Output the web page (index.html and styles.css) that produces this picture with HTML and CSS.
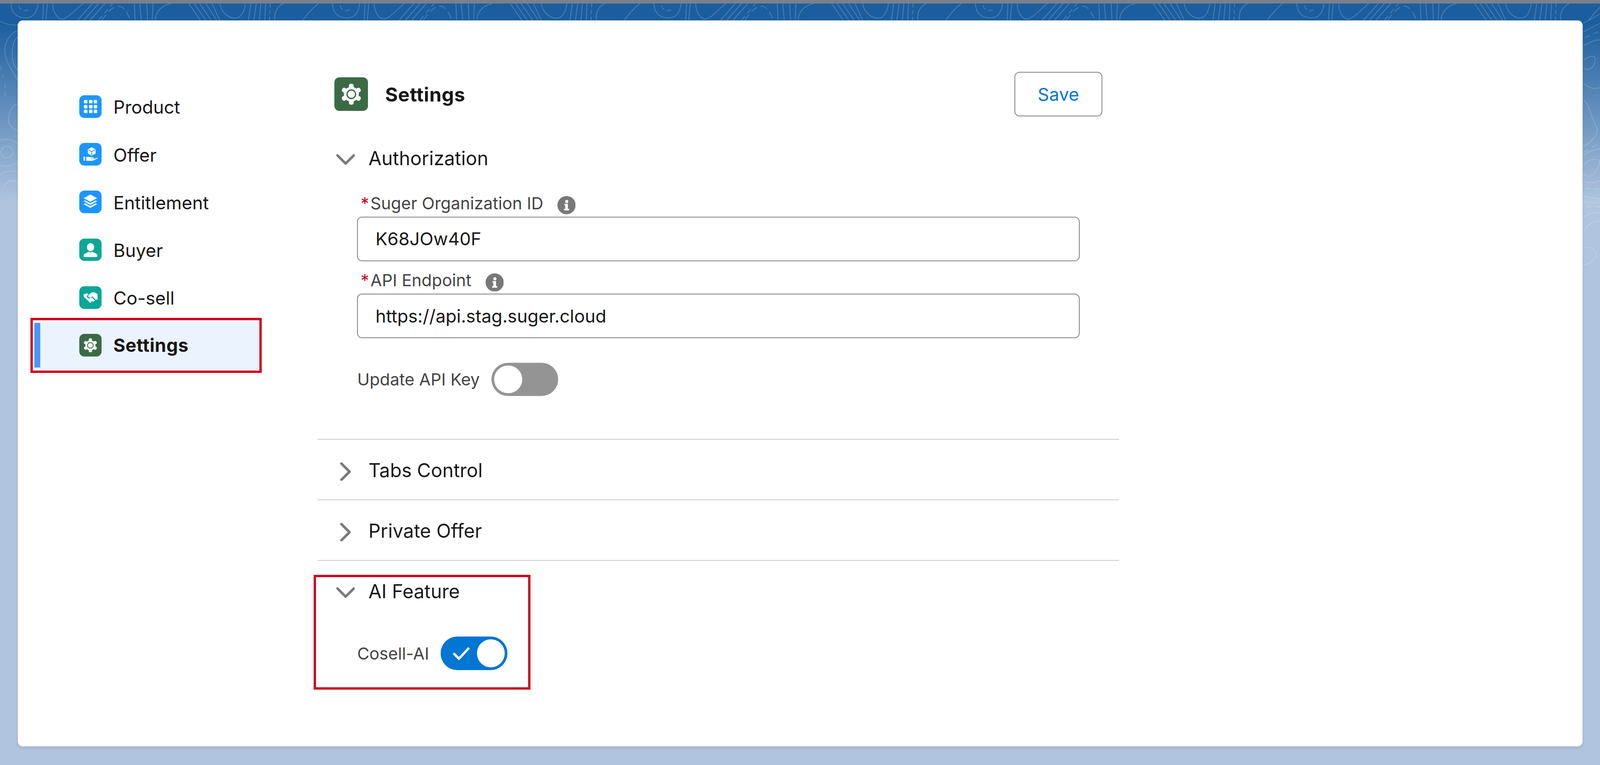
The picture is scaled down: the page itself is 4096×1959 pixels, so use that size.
FILE: index.html
```html
<!DOCTYPE html>
<html lang="en">
<head>
<meta charset="utf-8">
<title>Settings</title>
<link rel="stylesheet" href="styles.css">
</head>
<body>
<svg class="defs" width="0" height="0" aria-hidden="true">
  <defs>
    <symbol id="gear" viewBox="0 0 100 100">
      <g fill="#fff">
        <circle cx="50" cy="50" r="35"/>
        <rect x="39" y="1" width="22" height="30" rx="9"/>
        <rect x="39" y="1" width="22" height="30" rx="9" transform="rotate(60 50 50)"/>
        <rect x="39" y="1" width="22" height="30" rx="9" transform="rotate(120 50 50)"/>
        <rect x="39" y="1" width="22" height="30" rx="9" transform="rotate(180 50 50)"/>
        <rect x="39" y="1" width="22" height="30" rx="9" transform="rotate(240 50 50)"/>
        <rect x="39" y="1" width="22" height="30" rx="9" transform="rotate(300 50 50)"/>
      </g>
      <circle cx="50" cy="50" r="20" fill="none" stroke="#3b6b45" stroke-width="6"/>
    </symbol>
    <symbol id="chev-down" viewBox="0 0 48 48">
      <path d="M3 13 L24 34 L45 13" fill="none" stroke="#7a7a7a" stroke-width="6.5" stroke-linecap="round" stroke-linejoin="round"/>
    </symbol>
    <symbol id="chev-right" viewBox="0 0 48 48">
      <path d="M13 3 L34 24 L13 45" fill="none" stroke="#7a7a7a" stroke-width="6.5" stroke-linecap="round" stroke-linejoin="round"/>
    </symbol>
    <symbol id="info" viewBox="0 0 47 47">
      <circle cx="23.500" cy="23.500" r="23.500" fill="#787878"/>
      <circle cx="24" cy="14" r="4" fill="#fff"/>
      <path d="M18 20h9v13h3v4H17v-4h3v-9h-2z" fill="#fff"/>
    </symbol>
    <pattern id="topo" x="0" y="9" width="828" height="60" patternUnits="userSpaceOnUse">
      <g fill="none" stroke="#fff" stroke-opacity=".22" stroke-width="2">
        <path d="M28 0C30 30 48 37 66 37C88 37 96 20 98 0"/>
        <path d="M48 5C52 18 60 22 72 16" stroke-dasharray="12 8"/>
        <path d="M112 0L110 43M122 0L118 43"/>
        <path d="M136 0C136 25 150 40 160 40C176 40 204 5 214 0"/>
        <path d="M200 43L238 0M216 43L254 0M232 43L270 0"/>
        <path d="M254 43L290 0" stroke-dasharray="14 9"/>
        <path d="M262 43C274 28 286 8 306 7C322 8 330 30 336 43" stroke-dasharray="18 10"/>
        <path d="M346 0L348 43M360 0L364 43M378 0L380 43M394 0L392 43"/>
        <path d="M400 43C400 25 412 6 440 0"/>
        <path d="M486 0L516 43M500 0L530 43M514 0L544 43M530 0L558 43M546 0L566 43"/>
        <path d="M566 0C570 25 590 38 606 38C620 38 630 20 632 0"/>
        <path d="M646 0L640 43M660 0L654 43M672 0L668 43M684 0L682 43"/>
        <path d="M696 0L694 43" stroke-dasharray="10 7"/>
        <path d="M708 43C706 25 712 8 730 0"/>
        <path d="M780 43C790 30 802 14 820 0"/>
      </g>
    </pattern>
  </defs>
</svg>
<div class="page">
  <div class="topbar"></div>
  <svg class="backdrop" viewBox="0 0 4121 1971" aria-hidden="true">
    <rect x="0" y="9" width="4121" height="43" fill="url(#topo)"/>
    <g fill="none" stroke="#fff" stroke-opacity=".2" stroke-width="2">
      <path d="M0 55C10 60 25 66 45 64"/>
      <path d="M45 78C25 88 14 105 12 130C14 160 30 180 45 205"/>
      <path d="M45 95C34 105 30 125 32 150C34 165 40 175 45 180"/>
      <path d="M2 170L8 200M12 215C16 235 14 250 8 255" stroke-dasharray="12 10"/>
      <path d="M45 268C30 272 22 290 22 315C24 325 36 332 45 338"/>
      <circle cx="18" cy="392" r="15"/>
      <path d="M0 362C15 355 35 360 45 370M0 425C15 432 35 425 45 420"/>
      <path d="M0 450C15 438 35 440 45 444M10 480C20 465 35 462 45 470"/>
      <path d="M4078 60L4121 36M4078 82L4121 60"/>
      <path d="M4082 97L4121 80" stroke-dasharray="14 10"/>
      <path d="M4078 118C4095 110 4105 102 4121 103"/>
      <path d="M4078 155C4095 145 4105 140 4108 150C4110 165 4100 178 4090 179C4085 179 4080 176 4078 175"/>
      <path d="M4078 215C4095 228 4105 230 4121 226"/>
      <path d="M4080 260C4095 270 4100 310 4113 330C4118 345 4100 365 4078 378"/>
      <path d="M4080 392L4121 368" stroke-dasharray="14 10"/>
      <path d="M4078 400C4095 390 4105 385 4121 383"/>
      <path d="M4078 425C4090 412 4105 408 4117 412C4125 420 4110 450 4095 454C4085 455 4080 450 4078 445"/>
      <path d="M4078 468C4095 473 4110 470 4121 465"/>
      <path d="M4082 485L4121 488" stroke-dasharray="14 10"/>
      <path d="M4078 505C4100 510 4110 512 4121 512M4078 520C4100 522 4110 524 4121 522"/>
      <path d="M4085 533L4121 533" stroke-dasharray="14 10"/>
      <path d="M4078 560C4095 548 4110 547 4121 548"/>
      <path d="M4078 600C4085 578 4105 568 4121 570"/>
      <path d="M4078 638C4095 635 4110 640 4112 655C4110 670 4095 680 4078 682"/>
    </g>
  </svg>
  <main class="card">
    <nav class="sidebar">
      <a class="nav-item">
        <span class="tile tile-blue">
          <svg class="tile-art" viewBox="0 0 58 58">
            <g fill="#fff">
              <rect x="12" y="12" width="9" height="9" rx="2.500"/><rect x="25" y="12" width="9" height="9" rx="2.500"/><rect x="37" y="12" width="9" height="9" rx="2.500"/>
              <rect x="12" y="25" width="9" height="9" rx="2.500"/><rect x="25" y="25" width="9" height="9" rx="2.500"/><rect x="37" y="25" width="9" height="9" rx="2.500"/>
              <rect x="12" y="37" width="9" height="9" rx="2.500"/><rect x="25" y="37" width="9" height="9" rx="2.500"/><rect x="37" y="37" width="9" height="9" rx="2.500"/>
            </g>
          </svg>
        </span>
        <span class="nav-label">Product</span>
      </a>
      <a class="nav-item">
        <span class="tile tile-blue">
          <svg class="tile-art" viewBox="0 0 58 58">
            <path d="M32 11l10 5.500v11L32 33l-10-5.500v-11z" fill="#fff"/>
            <path d="M23 17l9 5.500 9-5.500M32 22.500V32" fill="none" stroke="#1b96ff" stroke-width="1.800"/>
            <rect x="11" y="35" width="4" height="11" rx="1" fill="#fff"/>
            <path d="M18 36h8c2 0 3 1 5 1h5c1.500 0 2 2.500.5 3h-7v1h8l8-2.500c2-.5 2.500 1 1 2l-11 5c-1 .4-2 .5-3 .5H18z" fill="#fff"/>
          </svg>
        </span>
        <span class="nav-label">Offer</span>
      </a>
      <a class="nav-item">
        <span class="tile tile-blue">
          <svg class="tile-art" viewBox="0 0 58 58">
            <g fill="#fff">
              <path d="M28.500 10L46 19.500 28.500 29 11 19.500z"/>
              <path d="M11 27.500l4-2 13.500 7 13.500-7 4 2-17.500 9.500z"/>
              <path d="M11 35l4-2 13.500 7 13.500-7 4 2-17.500 9.500z"/>
            </g>
          </svg>
        </span>
        <span class="nav-label">Entitlement</span>
      </a>
      <a class="nav-item">
        <span class="tile tile-teal">
          <svg class="tile-art" viewBox="0 0 58 58">
            <g fill="#fff">
              <ellipse cx="29" cy="22" rx="9.500" ry="10.500"/>
              <path d="M11 44c0-6 9-7 13-10 3 2 7 2 10 0 4 3 13 4 13 10 0 2-1 3.500-3 3.500H14c-2 0-3-1.500-3-3.500z"/>
            </g>
          </svg>
        </span>
        <span class="nav-label">Buyer</span>
      </a>
      <a class="nav-item">
        <span class="tile tile-teal">
          <svg class="tile-art" viewBox="0 0 58 58">
            <g fill="#fff">
              <path d="M24 22l9-7 7 1 7 4v14l-5 1-8-9-6 4-5-3z"/>
              <path d="M11 21l9-3 3 2-4 7 5 5 9-3 7 8-4 3-3-2-3 3-3-2-15-11z"/>
              <path d="M18 33l3-2 10 10-3 2z"/>
            </g>
          </svg>
        </span>
        <span class="nav-label">Co-sell</span>
      </a>
      <a class="nav-item nav-item-active">
        <span class="mark-box mark-box-nav"></span>
        <span class="tile tile-green">
          <svg class="tile-gear"><use href="#gear"/></svg>
        </span>
        <span class="nav-label">Settings</span>
      </a>
    </nav>
    <section class="content">
      <header class="head">
        <div class="head-title">
          <span class="head-tile"><svg class="head-gear"><use href="#gear"/></svg></span>
          <h1>Settings</h1>
        </div>
        <button class="save">Save</button>
      </header>

      <div class="acc acc-first">
        <div class="acc-head"><svg class="chev"><use href="#chev-down"/></svg><h2>Authorization</h2></div>
        <div class="acc-body acc-body-auth">
          <div class="field-label"><span class="req">*</span><span>Suger Organization ID</span><svg class="info"><use href="#info"/></svg></div>
          <div class="field-input">K68JOw40F</div>
          <div class="field-label field-label-next"><span class="req">*</span><span>API Endpoint</span><svg class="info"><use href="#info"/></svg></div>
          <div class="field-input">https://api.stag.suger.cloud</div>
          <div class="toggle-row toggle-row-auth">
            <span>Update API Key</span>
            <span class="toggle toggle-off"><span class="knob"></span></span>
          </div>
        </div>
      </div>

      <div class="acc">
        <div class="acc-head"><svg class="chev"><use href="#chev-right"/></svg><h2>Tabs Control</h2></div>
      </div>
      <div class="acc">
        <div class="acc-head"><svg class="chev"><use href="#chev-right"/></svg><h2>Private Offer</h2></div>
      </div>
      <div class="acc acc-ai">
        <span class="mark-box mark-box-ai"></span>
        <div class="acc-head"><svg class="chev"><use href="#chev-down"/></svg><h2>AI Feature</h2></div>
        <div class="acc-body">
          <div class="toggle-row toggle-row-ai">
            <span>Cosell-AI</span>
            <span class="toggle toggle-on">
              <svg class="check" viewBox="0 0 46 34"><path d="M3 17L17 31L43 3" fill="none" stroke="#fff" stroke-width="6"/></svg>
              <span class="knob"></span>
            </span>
          </div>
        </div>
      </div>
    </section>
  </main>
</div>
</body>
</html>
```

FILE: styles.css
```css
* { box-sizing: border-box; }
html, body { margin: 0; padding: 0; overflow: hidden; background: #b0c4df; }
.defs { position: absolute; }

.page {
  zoom: 0.99393;
  position: relative;
  width: 4121px;
  height: 1971px;
  font-family: Inter, "Noto Sans", sans-serif;
  color: #181818;
  background: linear-gradient(180deg, #1b5e9f 0, #1b5e9f 60px, #b0c4df 520px, #b0c4df 100%);
}
.topbar { position: relative; height: 9px; background: #7b808a; z-index: 1; }
.backdrop { position: absolute; left: 0; top: 0; width: 100%; height: 100%; }

.card {
  position: relative;
  display: grid;
  grid-template-columns: 772px 2064px;
  margin: 43px 0 0 45px;
  width: 4032px;
  height: 1872px;
  background: #fff;
  border: 2px solid #cbcbcb;
  border-radius: 13px;
  box-shadow: 0 4px 8px rgba(24, 24, 24, .1);
}

/* sidebar */
.sidebar {
  display: flex;
  flex-direction: column;
  gap: 8px;
  padding: 164px 151px 0 43px;
}
.nav-item {
  position: relative;
  display: flex;
  align-items: center;
  gap: 30px;
  height: 115px;
  padding-left: 115px;
  font-size: 46.500px;
}
.nav-label, .tile { position: relative; z-index: 1; }
.nav-label { padding-top: 3px; }
.nav-item-active { font-size: 47px; font-weight: 700; letter-spacing: .5px; }
.nav-item-active .nav-label { padding-top: 0; }
.nav-item-active::before {
  content: "";
  position: absolute;
  z-index: 1;
  left: 0; top: 0; bottom: 0;
  width: 15px;
  background: #4a95f8;
}
.mark-box { position: absolute; border: 7px solid #d0021f; }
.mark-box-nav { left: -11px; top: -13px; right: -7px; bottom: -14px; background: #ebf3fe; }
.mark-box-ai { left: -10px; top: 37px; width: 558px; height: 295px; }

.tile {
  flex: none;
  display: flex;
  align-items: center;
  justify-content: center;
  width: 58px;
  height: 58px;
  border-radius: 13px;
}
.tile-blue { background: #1b96ff; }
.tile-teal { background: #0ba797; }
.tile-green { background: #3b6b45; }
.tile-art { width: 58px; height: 58px; }
.tile-gear { width: 37px; height: 37px; }

/* content */
.content { padding-top: 132px; }
.head {
  display: flex;
  align-items: center;
  justify-content: space-between;
  height: 115px;
  padding: 0 43px;
}
.head-title { display: flex; align-items: center; gap: 44px; }
.head-tile {
  display: flex;
  align-items: center;
  justify-content: center;
  width: 87px;
  height: 87px;
  border-radius: 13px;
  background: #3b6b45;
}
.head-gear { width: 55px; height: 55px; }
h1 { margin: 2px 0 0; font-size: 50px; font-weight: 700; letter-spacing: .6px; }
.save {
  width: 226px;
  height: 115px;
  padding: 0;
  font: inherit;
  font-size: 46px;
  color: #0176d3;
  background: #fff;
  border: 3px solid #808080;
  border-radius: 13px;
}

.acc { position: relative; border-top: 3px solid #c9c9c9; }
.acc-first { margin-top: 32px; border-top: 0; }
.acc-head {
  display: flex;
  align-items: center;
  gap: 35px;
  height: 154px;
  padding: 5px 0 0 48px;
}
.acc-first .acc-head { height: 152.500px; padding-top: 0; }
.chev { flex: none; width: 48px; height: 48px; margin-top: 6px; }
h2 { margin: 0; font-size: 49px; font-weight: 400; }
.acc-body { padding-left: 102px; }
.acc-body-auth { padding-top: 16px; padding-bottom: 110px; width: 1963px; }

.field-label {
  display: flex;
  align-items: center;
  height: 46px;
  margin-bottom: 12px;
  padding-left: 9px;
  font-size: 43px;
  color: #444;
}
.field-label-next { margin-top: 26px; }
.req { width: 25px; color: #c9001f; }
.info { flex: none; width: 47px; height: 47px; margin: 11px 0 0 36px; }
.field-input {
  display: flex;
  align-items: center;
  height: 114.500px;
  padding-left: 45px;
  font-size: 46px;
  border: 3px solid #808080;
  border-radius: 13px;
  background: #fff;
}
.toggle-row {
  display: flex;
  align-items: center;
  gap: 30px;
  font-size: 43px;
  color: #444;
}
.toggle-row-auth { margin-top: 63px; }
.toggle-row-ai { margin-top: 42px; }
.toggle {
  position: relative;
  display: flex;
  align-items: center;
  width: 172px;
  height: 86px;
  padding: 0 7px;
  border-radius: 43px;
}
.toggle-off { background: #949494; }
.toggle-on { background: #0176d3; justify-content: space-between; padding-left: 30px; }
.knob { display: block; width: 72px; height: 72px; border-radius: 50%; background: #fff; }
.check { width: 46px; height: 34px; }
```
